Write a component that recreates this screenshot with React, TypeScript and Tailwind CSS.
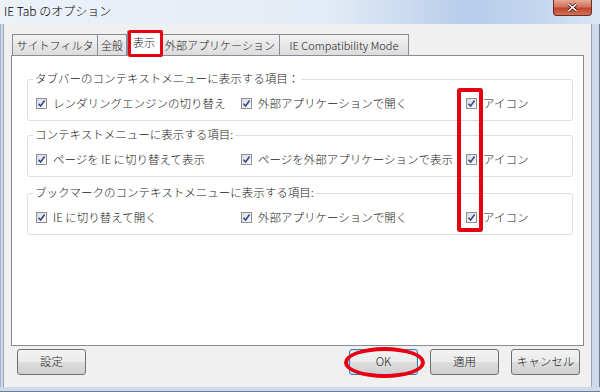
import type { ReactNode } from "react";

const tabs = [
  { label: "サイトフィルタ", w: "w-[86px]" },
  { label: "全般", w: "w-[30px]" },
  { label: "表示", w: "w-[34px]", active: true },
  { label: "外部アプリケーション", w: "w-[120px]" },
  { label: "IE Compatibility Mode", w: "w-[130px]" },
];

const groups = [
  {
    title: "タブバーのコンテキストメニューに表示する項目：",
    items: ["レンダリングエンジンの切り替え", "外部アプリケーションで開く", "アイコン"],
    mt: "mt-[23px]",
  },
  {
    title: "コンテキストメニューに表示する項目:",
    items: ["ページを IE に切り替えて表示", "ページを外部アプリケーションで表示", "アイコン"],
    mt: "mt-[14px]",
  },
  {
    title: "ブックマークのコンテキストメニューに表示する項目:",
    items: ["IE に切り替えて開く", "外部アプリケーションで開く", "アイコン"],
    mt: "mt-[16px]",
  },
];

function Check({ label }: { label: string }) {
  return (
    <div className="flex items-center gap-[6px]">
      <span className="flex h-[11px] w-[11px] items-center justify-center border border-[#8e8f8f] bg-[linear-gradient(135deg,#d9dce2,#fbfbfb)]">
        <svg width="9" height="9" viewBox="0 0 9 9">
          <path d="M1.5 4.8 L3.6 7 L7.6 1.6" fill="none" stroke="#34478a" strokeWidth="1.6" />
        </svg>
      </span>
      <span>{label}</span>
    </div>
  );
}

function Button({ children, primary }: { children: ReactNode; primary?: boolean }) {
  return (
    <button
      className={
        "h-[26px] w-[69px] rounded-[3px] border text-[11.5px] text-[#1b1b1b] bg-[linear-gradient(180deg,#f3f3f3_0%,#ebebeb_48%,#dddddd_52%,#d0d0d0_100%)] " +
        (primary ? "border-[#3c7fb1] shadow-[inset_0_0_0_1px_#bfe3f7]" : "border-[#707070]")
      }
    >
      {children}
    </button>
  );
}

export default function App() {
  return (
    <div className="relative flex h-[392px] w-[600px] flex-col overflow-hidden bg-[#cddbec] font-['Noto_Sans_CJK_JP','Liberation_Sans',sans-serif] text-[11.5px] font-light text-[#1a1a1a]">
      <header className="flex h-[24px] items-start justify-between bg-[linear-gradient(90deg,#edf2f9_0%,#e3ebf6_55%,#b7cdea_78%,#c3d6ee_90%,#dbe6f3_100%)]">
        <span className="pl-[4px] pt-[3px] text-[12px] leading-[16px] text-black">IE Tab のオプション</span>
        <span className="mr-[8px] flex h-[16px] w-[39px] items-center justify-center rounded-b-[4px] border border-t-0 border-[#6b2a24] bg-[linear-gradient(180deg,#e8a796_0%,#d0735d_45%,#c0442b_55%,#d2745a_100%)]">
          <svg width="11" height="9" viewBox="0 0 11 9">
            <path d="M1.5 1 L9.5 8 M9.5 1 L1.5 8" stroke="#4a1a14" strokeWidth="3" />
            <path d="M1.5 1 L9.5 8 M9.5 1 L1.5 8" stroke="#ffffff" strokeWidth="1.6" />
          </svg>
        </span>
      </header>

      <div className="flex flex-1">
        <div className="w-[3px] border-l border-[#9fb3cc]" />
        <div className="flex w-[589px] flex-col border-x border-[#97a3b3] bg-[#f0f0f0] px-[7px] pt-[7px] pb-[12px]">
          <div className="relative z-10 flex items-end pl-[1px] text-[11px]">
            {tabs.map((t) => (
              <div
                key={t.label}
                className={
                  t.active
                    ? "-mb-px flex h-[25px] items-start justify-center border border-b-0 border-[#898c95] bg-white pt-[2px] " + t.w
                    : "-ml-px flex h-[21px] items-center justify-center border border-b-0 border-[#898c95] bg-[linear-gradient(180deg,#f2f2f2,#dcdcdc)] first:ml-0 " + t.w
                }
              >
                {t.label}
              </div>
            ))}
          </div>
          <div className="h-[291px] border border-[#898c95] bg-white pl-[15px] pr-[10px]">
            {groups.map((g) => (
              <div
                key={g.title}
                className={"relative h-[42px] rounded-[3px] border border-[#d5dfe5] " + g.mt}
              >
                <span className="absolute -top-[10px] left-[5px] bg-white px-[2px] leading-[16px]">{g.title}</span>
                <div className="grid grid-cols-[205px_225px_1fr] pl-[8px] pt-[15px] leading-[16px]">
                  {g.items.map((it) => (
                    <Check key={it} label={it} />
                  ))}
                </div>
              </div>
            ))}
          </div>
          <div className="mt-[3px] flex items-center pl-[6px] pr-[4px]">
            <Button>設定</Button>
            <div className="flex-1" />
            <Button primary>OK</Button>
            <div className="w-[12px]" />
            <Button>適用</Button>
            <div className="w-[12px]" />
            <Button>キャンセル</Button>
          </div>
        </div>
        <div className="w-[8px] border-r border-[#6e7f95]" />
      </div>
      <div className="h-[5px] border-b border-[#6e7f95]" />

      <div className="pointer-events-none absolute left-[128px] top-[30px] z-20 h-[27px] w-[35px] rounded-[2px] border-[3px] border-[#e60012]" />
      <div className="pointer-events-none absolute left-[457px] top-[88px] z-20 h-[144px] w-[26px] rounded-[3px] border-[4px] border-[#e60012]" />
      <div className="pointer-events-none absolute left-[344px] top-[347px] z-20 h-[31px] w-[81px] rounded-[50%] border-[4px] border-[#e60012]" />
    </div>
  );
}
